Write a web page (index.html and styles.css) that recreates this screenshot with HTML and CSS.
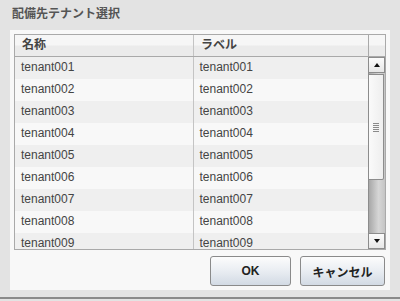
FILE: index.html
```html
<!DOCTYPE html>
<html lang="ja">
<head>
    <meta charset="UTF-8">
    <title>配備先テナント選択</title>
    <link rel="stylesheet" href="styles.css">
</head>
<body>
    <div class="dialog">
        <div class="dialog-title">配備先テナント選択</div>
        <div class="panel">
            <div class="grid">
                <div class="grid-head">
                    <div class="cell col-name">名称</div>
                    <div class="cell col-label">ラベル</div>
                    <div class="cell col-corner"></div>
                </div>
                <div class="grid-body">
                    <div class="rows">
                        <div class="row"><div class="cell col-name">tenant001</div><div class="cell col-label">tenant001</div></div>
                        <div class="row"><div class="cell col-name">tenant002</div><div class="cell col-label">tenant002</div></div>
                        <div class="row"><div class="cell col-name">tenant003</div><div class="cell col-label">tenant003</div></div>
                        <div class="row"><div class="cell col-name">tenant004</div><div class="cell col-label">tenant004</div></div>
                        <div class="row"><div class="cell col-name">tenant005</div><div class="cell col-label">tenant005</div></div>
                        <div class="row"><div class="cell col-name">tenant006</div><div class="cell col-label">tenant006</div></div>
                        <div class="row"><div class="cell col-name">tenant007</div><div class="cell col-label">tenant007</div></div>
                        <div class="row"><div class="cell col-name">tenant008</div><div class="cell col-label">tenant008</div></div>
                        <div class="row"><div class="cell col-name">tenant009</div><div class="cell col-label">tenant009</div></div>
                    </div>
                    <div class="scrollbar">
                        <div class="scroll-btn"><span class="arrow-up"></span></div>
                        <div class="scroll-track">
                            <div class="scroll-thumb"><span class="grip"></span></div>
                        </div>
                        <div class="scroll-btn"><span class="arrow-down"></span></div>
                    </div>
                </div>
            </div>
            <div class="actions">
                <button type="button" class="btn btn-ok">OK</button>
                <button type="button" class="btn btn-cancel">キャンセル</button>
            </div>
        </div>
    </div>
</body>
</html>
```

FILE: styles.css
```css
body {
    margin: 0;
    font-family: "Liberation Sans", "Noto Sans CJK JP", sans-serif;
    font-size: 12px;
    background-color: #e3e3e3;
}
.dialog {
    width: 400px;
    height: 299px;
    box-sizing: border-box;
    background-color: #e3e3e3;
    border-bottom: 2px solid #8a8a8a;
}
.dialog-title {
    height: 30px;
    line-height: 28px;
    padding-left: 12px;
    font-weight: bold;
    color: #555;
}
.panel {
    margin: 0 10px;
    height: 260px;
    padding: 4px 5px 0 4px;
    box-sizing: border-box;
    background-color: #f8f8f8;
}
.grid {
    width: 372px;
    height: 216px;
    box-sizing: border-box;
    border: 1px solid #a9a9a9;
    display: flex;
    flex-direction: column;
    overflow: hidden;
}
.grid-head {
    display: flex;
    height: 22px;
    box-sizing: border-box;
    border-bottom: 1px solid #a9a9a9;
    background: linear-gradient(#f6f6f6 0, #f6f6f6 48%, #ebebeb 52%, #ebebeb 100%);
    font-weight: bold;
    color: #444;
}
.cell {
    box-sizing: border-box;
    padding-left: 6px;
    white-space: nowrap;
    overflow: hidden;
}
.grid-head .cell {
    line-height: 21px;
    padding-left: 7px;
}
.col-name {
    width: 179px;
    border-right: 1px solid #c4c4c4;
}
.col-label {
    width: 175px;
}
.grid-head .col-label {
    border-right: 1px solid #a9a9a9;
}
.col-corner {
    flex: 1;
}
.grid-body {
    flex: 1;
    display: flex;
    min-height: 0;
}
.rows {
    flex: 1;
    overflow: hidden;
    color: #444;
}
.row {
    display: flex;
    height: 22px;
    line-height: 21px;
    background-color: #f8f8f8;
}
.row:nth-child(odd) {
    background-color: #efefef;
}
.scrollbar {
    width: 16px;
    display: flex;
    flex-direction: column;
    border-left: 1px solid #8c8c8c;
    background: linear-gradient(to right, #a8a8a8, #d6d6d6 60%, #c4c4c4);
}
.scroll-btn {
    height: 16px;
    box-sizing: border-box;
    border: 1px solid #8c8c8c;
    border-left: none;
    background: linear-gradient(#fbfbfb, #e6e6e6);
    display: flex;
    align-items: center;
    justify-content: center;
}
.arrow-up, .arrow-down {
    width: 0;
    height: 0;
    border-left: 3px solid transparent;
    border-right: 3px solid transparent;
}
.arrow-up {
    border-bottom: 4px solid #111;
}
.arrow-down {
    border-top: 4px solid #111;
}
.scroll-track {
    flex: 1;
    padding-top: 1px;
}
.scroll-thumb {
    height: 106px;
    box-sizing: border-box;
    margin-right: 1px;
    border: 1px solid #8c8c8c;
    border-left: none;
    border-radius: 0 0 2px 0;
    background: linear-gradient(to right, #fafafa, #eeeeee);
    display: flex;
    align-items: center;
    justify-content: center;
}
.grip {
    width: 6px;
    height: 9px;
    margin-right: 1px;
    background: repeating-linear-gradient(#8a8a8a 0, #8a8a8a 1px, transparent 1px, transparent 2px);
}
.actions {
    display: flex;
    justify-content: flex-end;
    gap: 9px;
    padding-top: 6px;
}
.btn {
    height: 30px;
    box-sizing: border-box;
    border: 1px solid #8a8a8a;
    border-radius: 3px;
    background: linear-gradient(#fcfcfc, #e9edf2 50%, #d2dae4);
    font-family: "Liberation Sans", "Noto Sans CJK JP", sans-serif;
    font-size: 12px;
    font-weight: bold;
    color: #222;
    padding: 0;
}
.btn-ok {
    width: 81px;
}
.btn-cancel {
    width: 85px;
}
```
